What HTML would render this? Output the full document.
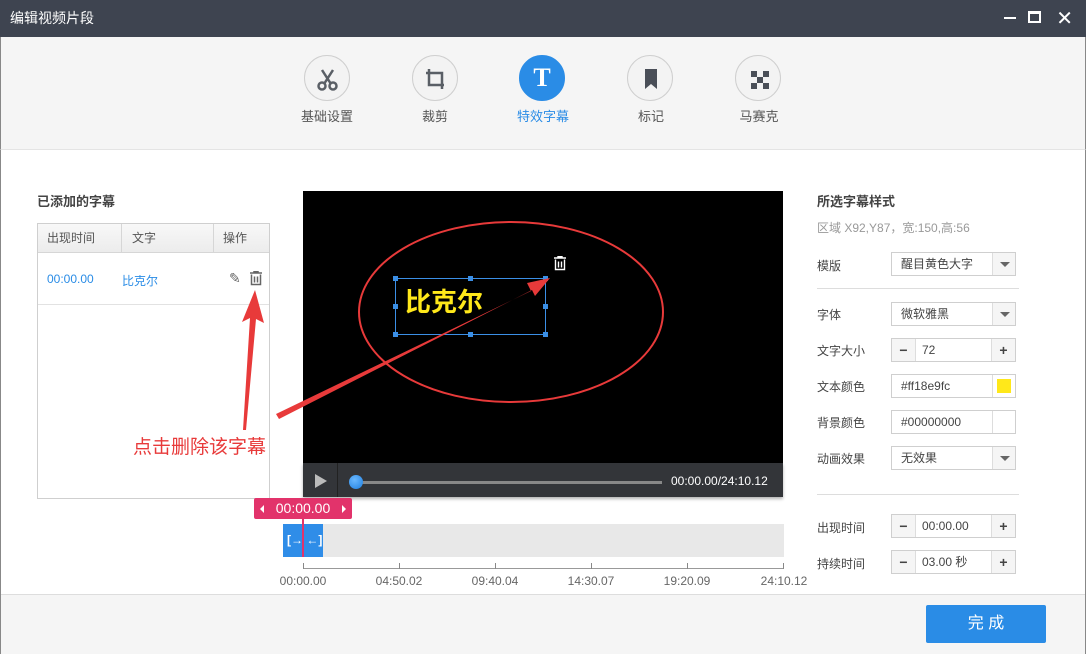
<!DOCTYPE html><html><head><meta charset="utf-8"><style>
*{margin:0;padding:0;box-sizing:border-box}
body{width:1086px;height:654px;overflow:hidden;background:#fff;font-family:"Liberation Sans","Noto Sans CJK SC",sans-serif;font-size:13px;color:#333;position:relative}
.a{position:absolute}
.title{left:0;top:0;width:1086px;height:37px;background:#3e4450;color:#fff;font-size:14px;line-height:37px;padding-left:10px}
.tb{left:0;top:37px;width:1086px;height:113px;background:#f5f5f5;border-bottom:1px solid #e4e4e4;border-left:1px solid #888;border-right:1px solid #888}
.ic{width:46px;height:46px;border-radius:50%;background:#f3f3f3;border:1px solid #cfcfcf;top:55px}
.il{top:106px;font-size:13px;color:#555;width:100px;text-align:center}
.lbl{left:817px;color:#444;font-size:12px}
.box{border:1px solid #cfcfcf;background:#fff;height:24px;font-size:12px;line-height:22px;color:#444}
.dd{position:absolute;right:0;top:0;width:23px;height:22px;border-left:1px solid #ddd;background:#f5f5f5}
.dd:after{content:"";position:absolute;left:7px;top:9px;border:5px solid transparent;border-top:5px solid #666}
.pm{position:absolute;top:0;width:24px;height:22px;background:#f5f5f5;text-align:center;font-weight:bold;font-size:14px;color:#444}
.tick{top:563px;width:1px;height:6px;background:#888}
.tl{top:574px;font-size:12px;color:#666;width:70px;text-align:center}
</style></head><body>
<div class="a title">编辑视频片段</div>
<div class="a" style="right:70px;top:17px;width:12px;height:2px;background:#fff"></div>
<div class="a" style="right:45px;top:11px;width:13px;height:12px;border:2px solid #fff;border-top-width:3px"></div>
<div class="a" style="right:13px;top:6px;color:#fff;font-size:20px">✕</div>
<div class="a tb"></div>
<div class="a" style="left:0;top:150px;width:1px;height:504px;background:#888"></div>
<div class="a" style="right:0;top:150px;width:1px;height:504px;background:#888"></div>

<div class="a ic" style="left:304px"><svg width="46" height="46"><g fill="none" stroke="#5a5f66" stroke-width="2.5"><line x1="17" y1="14" x2="26" y2="28"/><line x1="28" y1="14" x2="19" y2="28"/><circle cx="17" cy="30" r="3.5"/><circle cx="28" cy="30" r="3.5"/></g></svg></div>
<div class="a il" style="left:277px">基础设置</div>
<div class="a ic" style="left:412px"><svg width="46" height="46"><path d="M16 13v16h15M13 17h16v16" fill="none" stroke="#5a5f66" stroke-width="2.5"/></svg></div>
<div class="a il" style="left:385px">裁剪</div>
<div class="a ic" style="left:519px;background:#2a8ce6;border-color:#2a8ce6;color:#fff;font:bold 26px 'Liberation Serif',serif;text-align:center;line-height:44px">T</div>
<div class="a il" style="left:493px;color:#2a8ce6">特效字幕</div>
<div class="a ic" style="left:627px"><svg width="46" height="46"><path d="M17 13h12v20l-6-5-6 5z" fill="#4a4f58"/></svg></div>
<div class="a il" style="left:601px">标记</div>
<div class="a ic" style="left:735px"><svg width="46" height="46"><g fill="#4a4f58"><rect x="15" y="15" width="6" height="6"/><rect x="27" y="15" width="6" height="6"/><rect x="21" y="21" width="6" height="6"/><rect x="15" y="27" width="6" height="6"/><rect x="27" y="27" width="6" height="6"/></g></svg></div>
<div class="a il" style="left:709px">马赛克</div>

<div class="a" style="left:37px;top:191px;font-size:13px;font-weight:bold;color:#444">已添加的字幕</div>
<div class="a" style="left:37px;top:223px;width:233px;height:276px;border:1px solid #cfcfcf"></div>
<div class="a" style="left:38px;top:224px;width:231px;height:29px;background:linear-gradient(#f8f8f8,#ececec);border-bottom:1px solid #d6d6d6;font-size:12px;color:#555;line-height:28px">
<span class="a" style="left:9px">出现时间</span><span class="a" style="left:83px;top:0;height:28px;border-left:1px solid #d6d6d6;padding-left:10px">文字</span><span class="a" style="left:175px;top:0;height:28px;border-left:1px solid #d6d6d6;padding-left:9px">操作</span></div>
<div class="a" style="left:38px;top:304px;width:231px;height:1px;background:#e2e2e2"></div>
<div class="a" style="left:47px;top:272px;color:#2a8ce6;font-size:12px">00:00.00</div>
<div class="a" style="left:122px;top:272px;color:#2a8ce6;font-size:12px">比克尔</div>
<div class="a" style="left:229px;top:270px;color:#666;font-size:14px">✎</div>
<svg class="a" style="left:249px;top:271px" width="14" height="15"><path d="M1 2h12M5 2V0.5h4V2M2.5 3.5v10h9v-10M5.5 5.5v6M8.5 5.5v6" fill="none" stroke="#666" stroke-width="1.5"/></svg>

<div class="a" style="left:303px;top:191px;width:480px;height:272px;background:#000"></div>
<div class="a" style="left:303px;top:463px;width:480px;height:34px;background:#333539;box-shadow:0 2px 3px rgba(0,0,0,.3)"></div>
<div class="a" style="left:337px;top:463px;width:1px;height:34px;background:#222"></div>
<svg class="a" style="left:313px;top:472px" width="16" height="18"><path d="M2 2l12 7-12 7z" fill="#bbb"/></svg>
<div class="a" style="left:356px;top:481px;width:306px;height:3px;background:#888"></div>
<div class="a" style="left:349px;top:475px;width:14px;height:14px;border-radius:50%;background:radial-gradient(circle at 40% 35%,#6ab8ff,#1f7fe0)"></div>
<div class="a" style="left:671px;top:474px;color:#fff;font-size:12px">00:00.00/24:10.12</div>

<div class="a" style="left:395px;top:278px;width:151px;height:57px;border:1px solid #3b8fe6"></div>
<div class="a" style="left:405px;top:282px;color:#ffe81a;font-size:26px;font-weight:bold">比克尔</div>
<div class="a" style="left:393px;top:276px;width:5px;height:5px;background:#3b8fe6;box-shadow:75px 0 #3b8fe6,150px 0 #3b8fe6,0 28px #3b8fe6,150px 28px #3b8fe6,0 56px #3b8fe6,75px 56px #3b8fe6,150px 56px #3b8fe6"></div>
<svg class="a" style="left:553px;top:256px" width="14" height="15"><path d="M1 2h12M5 2V0.5h4V2M2.5 3.5v10h9v-10M5.5 5.5v6M8.5 5.5v6" fill="none" stroke="#fff" stroke-width="1.4"/></svg>

<svg class="a" style="left:0;top:0" width="1086" height="654"><g fill="none" stroke="#e83a3a" stroke-width="2"><ellipse cx="511" cy="312" rx="152" ry="90"/></g>
<path d="M276 414L531 291l-4-8 23-5-15 18-3-6L279 419z" fill="#e83a3a"/>
<path d="M243 430L250 318l-8 4 13-32 9 33-8-4-10 111z" fill="#e83a3a"/></svg>
<div class="a" style="left:133px;top:432px;color:#e83a3a;font-size:19px">点击删除该字幕</div>

<div class="a" style="left:254px;top:498px;width:98px;height:21px;background:#e2336b;border-radius:2px;color:#fff;font-size:14px;line-height:21px;text-align:center">00:00.00</div>
<div class="a" style="left:260px;top:505px;border:4px solid transparent;border-right:4px solid #fff;border-left:0"></div>
<div class="a" style="left:342px;top:505px;border:4px solid transparent;border-left:4px solid #fff;border-right:0"></div>
<div class="a" style="left:283px;top:524px;width:501px;height:33px;background:#e8e8e8"></div>
<div class="a" style="left:283px;top:524px;width:40px;height:33px;background:#2f8de8;color:#fff;font-weight:bold;font-size:12px;line-height:33px;padding-left:4px">[→ ←]</div>
<div class="a" style="left:302px;top:519px;width:2px;height:38px;background:#e2336b"></div>
<div class="a" style="left:303px;top:568px;width:480px;height:1px;background:#999"></div>
<div class="a tick" style="left:303px"></div><div class="a tick" style="left:399px"></div><div class="a tick" style="left:495px"></div><div class="a tick" style="left:591px"></div><div class="a tick" style="left:687px"></div><div class="a tick" style="left:783px"></div>
<div class="a tl" style="left:268px">00:00.00</div><div class="a tl" style="left:364px">04:50.02</div><div class="a tl" style="left:460px">09:40.04</div><div class="a tl" style="left:556px">14:30.07</div><div class="a tl" style="left:652px">19:20.09</div><div class="a tl" style="left:749px">24:10.12</div>

<div class="a" style="left:817px;top:191px;font-weight:bold;color:#444">所选字幕样式</div>
<div class="a" style="left:817px;top:219px;font-size:12px;color:#999">区域 X92,Y87，宽:150,高:56</div>
<div class="a lbl" style="top:257px">模版</div>
<div class="a box" style="left:891px;top:252px;width:125px;padding-left:9px">醒目黄色大字<div class="dd"></div></div>
<div class="a" style="left:817px;top:288px;width:202px;height:1px;background:#ddd"></div>
<div class="a lbl" style="top:306px">字体</div>
<div class="a box" style="left:891px;top:302px;width:125px;padding-left:9px">微软雅黑<div class="dd"></div></div>
<div class="a lbl" style="top:342px">文字大小</div>
<div class="a box" style="left:891px;top:338px;width:125px"><div class="pm" style="left:0;border-right:1px solid #ddd">−</div><span style="position:absolute;left:30px">72</span><div class="pm" style="right:0;border-left:1px solid #ddd">+</div></div>
<div class="a lbl" style="top:378px">文本颜色</div>
<div class="a box" style="left:891px;top:374px;width:125px;padding-left:9px">#ff18e9fc<div style="position:absolute;right:0;top:0;width:23px;height:22px;border-left:1px solid #ddd"><div style="margin:4px 0 0 4px;width:14px;height:14px;background:#ffe81a"></div></div></div>
<div class="a lbl" style="top:414px">背景颜色</div>
<div class="a box" style="left:891px;top:410px;width:125px;padding-left:9px">#00000000<div style="position:absolute;right:0;top:0;width:23px;height:22px;border-left:1px solid #ddd"></div></div>
<div class="a lbl" style="top:450px">动画效果</div>
<div class="a box" style="left:891px;top:446px;width:125px;padding-left:9px">无效果<div class="dd"></div></div>
<div class="a" style="left:817px;top:494px;width:202px;height:1px;background:#ddd"></div>
<div class="a lbl" style="top:519px">出现时间</div>
<div class="a box" style="left:891px;top:514px;width:125px"><div class="pm" style="left:0;border-right:1px solid #ddd">−</div><span style="position:absolute;left:30px">00:00.00</span><div class="pm" style="right:0;border-left:1px solid #ddd">+</div></div>
<div class="a lbl" style="top:555px">持续时间</div>
<div class="a box" style="left:891px;top:550px;width:125px"><div class="pm" style="left:0;border-right:1px solid #ddd">−</div><span style="position:absolute;left:30px">03.00 秒</span><div class="pm" style="right:0;border-left:1px solid #ddd">+</div></div>

<div class="a" style="left:1px;top:594px;width:1084px;height:60px;background:#f5f5f5;border-top:1px solid #ddd"></div>
<div class="a" style="left:926px;top:605px;width:120px;height:38px;background:#2a8ce6;border-radius:2px;color:#fff;font-size:16px;line-height:38px;text-align:center">完 成</div>
</body></html>
